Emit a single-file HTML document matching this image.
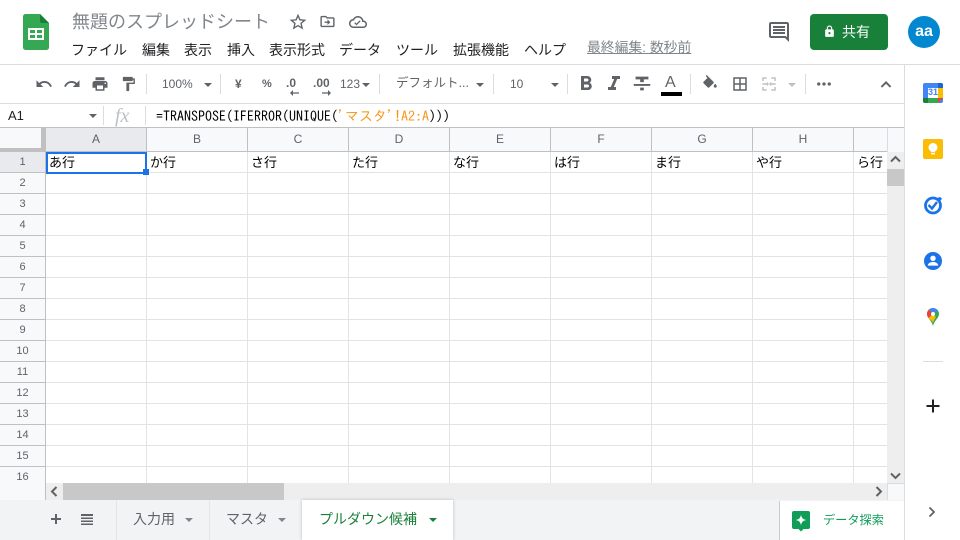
<!DOCTYPE html>
<html><head><meta charset="utf-8">
<style>
html,body{margin:0;padding:0;background:#fff}
#p{position:relative;width:960px;height:540px;overflow:hidden;background:#fff;font-family:"Liberation Sans","Noto Sans CJK JP",sans-serif;color:#3c4043}
.t{position:absolute;white-space:nowrap;line-height:1}
.a{position:absolute}
svg{position:absolute;overflow:visible}
.m{font-size:14px;top:43px;color:#202124}
.sep{position:absolute;top:74px;width:1px;height:20px;background:#dadce0}
.tb{font-size:12px;color:#5f6368;top:78px}
.ch{position:absolute;top:128px;height:23px;width:100px;text-align:center;font-size:12px;line-height:22px;color:#5f6368;border-right:1px solid #c0c0c0;background:#f8f9fa}
.rh{position:absolute;left:0;width:45px;height:20px;text-align:center;font-size:11px;line-height:21px;color:#5f6368;background:#f8f9fa;border-bottom:1px solid #c0c0c0;border-right:1px solid #c0c0c0}
.c{position:absolute;top:155px;font-size:13px;line-height:16px;color:#000;white-space:nowrap}
.tri{position:absolute;width:0;height:0;border-left:4px solid transparent;border-right:4px solid transparent;border-top:4px solid #5f6368}
</style></head><body><div id="p">

<!-- sheets logo -->
<svg style="left:23px;top:14px" width="26" height="36" viewBox="0 0 26 36"><path d="M2.500 0H17L26 9V33.500A2.500 2.500 0 0 1 23.500 36H2.500A2.500 2.500 0 0 1 0 33.500V2.500A2.500 2.500 0 0 1 2.500 0Z" fill="#34a853"/><path d="M17 0L26 9H19A2 2 0 0 1 17 7Z" fill="#188038"/><path d="M5 14H21V26H5ZM7 16V19H12V16ZM14 16V19H19V16ZM7 21V24H12V21ZM14 21V24H19V21Z" fill="#fff" fill-rule="evenodd"/></svg>

<div class="t" style="left:72px;top:13px;font-size:18px;color:#80868b">無題のスプレッドシート</div>
<svg style="left:288px;top:12px" width="20" height="20" viewBox="0 0 24 24"><path d="M22 9.240l-7.190-.62L12 2 9.190 8.630 2 9.240l5.460 4.730L5.820 21 12 17.270 18.180 21l-1.630-7.030L22 9.240zM12 15.400l-3.760 2.270 1-4.280-3.320-2.880 4.380-.38L12 6.100l1.710 4.040 4.380.38-3.320 2.880 1 4.280L12 15.400z" fill="#5f6368"/></svg>
<svg style="left:319px;top:13px" width="17" height="17" viewBox="0 0 24 24"><path d="M20 6h-8l-2-2H4c-1.100 0-2 .9-2 2v12c0 1.100.9 2 2 2h16c1.100 0 2-.9 2-2V8c0-1.100-.9-2-2-2zm0 12H4V6h5.170l2 2H20v10zm-8-4H8v-2h4V9l4 4-4 4v-3z" fill="#5f6368"/></svg>
<svg style="left:349px;top:13px" width="18" height="18" viewBox="0 0 24 24"><path d="M19.350 10.040C18.670 6.590 15.640 4 12 4 9.110 4 6.600 5.640 5.350 8.040 2.340 8.360 0 10.910 0 14c0 3.310 2.690 6 6 6h13c2.760 0 5-2.240 5-5 0-2.640-2.050-4.780-4.650-4.960zM19 18H6c-2.210 0-4-1.790-4-4s1.790-4 4-4h.71C7.370 7.690 9.480 6 12 6c3.040 0 5.500 2.460 5.500 5.500v.5H19c1.660 0 3 1.340 3 3s-1.340 3-3 3zm-9-1.500l-3-3 1.200-1.200 1.800 1.800 4.300-4.300 1.200 1.200z" fill="#5f6368"/></svg>

<div class="t m" style="left:71px">ファイル</div>
<div class="t m" style="left:142px">編集</div>
<div class="t m" style="left:184px">表示</div>
<div class="t m" style="left:227px">挿入</div>
<div class="t m" style="left:269px">表示形式</div>
<div class="t m" style="left:339px">データ</div>
<div class="t m" style="left:396px">ツール</div>
<div class="t m" style="left:453px">拡張機能</div>
<div class="t m" style="left:524px">ヘルプ</div>
<div class="t" style="left:587px;top:41px;font-size:13.800px;color:#80868b;text-decoration:underline">最終編集: 数秒前</div>

<!-- comment -->
<svg style="left:767px;top:20px" width="24" height="24" viewBox="0 0 24 24"><path d="M20 2H4c-1.100 0-2 .9-2 2v12c0 1.100.9 2 2 2h14l4 4V4c0-1.100-.9-2-2-2zm0 15.200L18.800 16H4V4h16v13.200zM6 12h12v2H6zm0-3h12v2H6zm0-3h12v2H6z" fill="#5f6368"/></svg>
<!-- share -->
<div class="a" style="left:810px;top:14px;width:78px;height:36px;background:#188038;border-radius:4px"></div>
<svg style="left:823px;top:25px" width="13" height="13" viewBox="0 0 24 24"><path d="M18 8h-1V6c0-2.760-2.240-5-5-5S7 3.240 7 6v2H6c-1.100 0-2 .9-2 2v10c0 1.100.9 2 2 2h12c1.100 0 2-.9 2-2V10c0-1.100-.9-2-2-2zM9 6c0-1.660 1.340-3 3-3s3 1.340 3 3v2H9V6zm3 11c-1.100 0-2-.9-2-2s.9-2 2-2 2 .9 2 2-.9 2-2 2z" fill="#fff"/></svg>
<div class="t" style="left:842px;top:25px;font-size:14px;color:#fff">共有</div>
<div class="a" style="left:908px;top:16px;width:32px;height:32px;border-radius:50%;background:#0288d1;color:#fff;font-size:16px;font-weight:bold;line-height:31px;text-align:center">aa</div>

<div class="a" style="left:0;top:64px;width:960px;height:1px;background:#dadce0"></div>

<!-- toolbar -->
<svg style="left:35px;top:75px" width="18" height="18" viewBox="0 0 24 24"><path d="M12.500 8c-2.650 0-5.050.99-6.900 2.600L2 7v9h9l-3.620-3.620c1.390-1.160 3.160-1.880 5.120-1.880 3.540 0 6.550 2.310 7.600 5.500l2.370-.78C21.080 11.030 17.150 8 12.500 8z" fill="#5f6368"/></svg>
<svg style="left:63px;top:75px" width="18" height="18" viewBox="0 0 24 24"><path d="M18.400 10.600C16.550 8.990 14.150 8 11.500 8c-4.650 0-8.580 3.030-9.960 7.220L3.900 16c1.050-3.190 4.050-5.500 7.600-5.500 1.950 0 3.730.72 5.120 1.880L13 16h9V7l-3.600 3.600z" fill="#5f6368"/></svg>
<svg style="left:91px;top:75px" width="18" height="18" viewBox="0 0 24 24"><path d="M19 8H5c-1.660 0-3 1.340-3 3v6h4v4h12v-4h4v-6c0-1.660-1.340-3-3-3zm-3 11H8v-5h8v5zm3-7c-.55 0-1-.45-1-1s.45-1 1-1 1 .45 1 1-.45 1-1 1zm-1-9H6v4h12V3z" fill="#5f6368"/></svg>
<svg style="left:120px;top:75px" width="17" height="18" viewBox="0 0 24 24"><path d="M18 4V3c0-.55-.45-1-1-1H5c-.55 0-1 .45-1 1v4c0 .55.45 1 1 1h12c.55 0 1-.45 1-1V6h1v4H9v11c0 .55.45 1 1 1h2c.55 0 1-.45 1-1v-9h8V4h-3z" fill="#5f6368"/></svg>
<div class="sep" style="left:146px"></div>
<div class="t tb" style="left:162px">100%</div><div class="tri" style="left:204px;top:83px"></div>
<div class="sep" style="left:220px"></div>
<div class="t tb" style="left:235px;font-weight:bold;font-size:12px;top:78px">¥</div>
<div class="t tb" style="left:262px;top:79px;font-size:11px;font-weight:bold">%</div>
<div class="t tb" style="left:286px;top:77px;font-weight:bold;font-size:12px">.0</div>
<svg style="left:290px;top:90px" width="9" height="6" viewBox="0 0 9 6"><path d="M9 2.400H3V0L0 3l3 3V3.600h6z" fill="#5f6368"/></svg>
<div class="t tb" style="left:313px;top:77px;font-weight:bold;font-size:12px">.00</div>
<svg style="left:322px;top:90px" width="9" height="6" viewBox="0 0 9 6"><path d="M0 2.400h6V0l3 3-3 3V3.600H0z" fill="#5f6368"/></svg>
<div class="t tb" style="left:340px">123</div><div class="tri" style="left:362px;top:83px"></div>
<div class="sep" style="left:379px"></div>
<div class="t tb" style="left:396px;top:77px;font-size:12.500px">デフォルト...</div><div class="tri" style="left:476px;top:83px"></div>
<div class="sep" style="left:493px"></div>
<div class="t tb" style="left:510px">10</div><div class="tri" style="left:551px;top:83px"></div>
<div class="sep" style="left:567px"></div>
<svg style="left:574px;top:72px" width="24" height="24" viewBox="0 0 24 24"><path d="M15.600 10.790c.97-.67 1.650-1.770 1.650-2.790 0-2.260-1.750-4-4-4H7v14h7.040c2.090 0 3.710-1.700 3.710-3.790 0-1.520-.86-2.820-2.150-3.420zM10 6.500h3c.83 0 1.500.67 1.500 1.500s-.67 1.500-1.500 1.500h-3v-3zm3.500 9H10v-3h3.500c.83 0 1.500.67 1.500 1.500s-.67 1.500-1.500 1.500z" fill="#5f6368"/></svg>
<svg style="left:602px;top:72px" width="24" height="24" viewBox="0 0 24 24"><path d="M10 4v3h2.210l-3.420 8H6v3h8v-3h-2.210l3.420-8H18V4z" fill="#5f6368"/></svg>
<svg style="left:631px;top:72px" width="22" height="24" viewBox="0 0 24 24"><path d="M10 19h4v-3h-4v3zM5 4v3h5v3h4V7h5V4H5zM3 14h18v-2H3v2z" fill="#5f6368"/></svg>
<div class="t" style="left:665px;top:75px;font-size:16px;color:#5f6368">A</div>
<div class="a" style="left:661px;top:92px;width:21px;height:4px;background:#000"></div>
<div class="sep" style="left:690px"></div>
<svg style="left:701px;top:75px" width="18" height="18" viewBox="0 0 24 24"><path d="M16.560 8.940L7.620 0 6.210 1.410l2.380 2.380-5.150 5.150c-.59.59-.59 1.540 0 2.120l5.500 5.500c.29.29.68.44 1.060.44s.77-.15 1.060-.44l5.500-5.500c.59-.58.59-1.530 0-2.120zM19 11.500s-2 2.170-2 3.500c0 1.100.9 2 2 2s2-.9 2-2c0-1.330-2-3.500-2-3.500z" fill="#5f6368"/></svg>
<svg style="left:731px;top:75px" width="18" height="18" viewBox="0 0 24 24"><path d="M3 3v18h18V3H3zm8 16H5v-6h6v6zm0-8H5V5h6v6zm8 8h-6v-6h6v6zm0-8h-6V5h6v6z" fill="#5f6368"/></svg>
<svg style="left:760px;top:75px" width="18" height="18" viewBox="0 0 24 24"><path d="M3 3h6v2H5v3H3zM15 3h6v5h-2V5h-4zM3 16h2v3h4v2H3zM19 16h2v5h-6v-2h4zM3 11h6V9l3 3-3 3v-2H3zM21 11h-6V9l-3 3 3 3v-2h6z" fill="#bdc1c6"/></svg>
<div class="tri" style="left:788px;top:83px;border-top-color:#bdc1c6"></div>
<div class="sep" style="left:805px"></div>
<svg style="left:815px;top:75px" width="18" height="18" viewBox="0 0 24 24"><circle cx="5" cy="12" r="2.200" fill="#5f6368"/><circle cx="12" cy="12" r="2.200" fill="#5f6368"/><circle cx="19" cy="12" r="2.200" fill="#5f6368"/></svg>
<svg style="left:877px;top:75px" width="18" height="18" viewBox="0 0 24 24"><path d="M12 8l-7 7 1.800 1.800L12 11.600l5.200 5.200L19 15z" fill="#5f6368"/></svg>

<div class="a" style="left:0;top:103px;width:904px;height:1px;background:#dadce0"></div>

<!-- formula bar -->
<div class="t" style="left:8px;top:109px;font-size:13px;color:#202124">A1</div>
<div class="tri" style="left:89px;top:114px"></div>
<div class="a" style="left:103px;top:106px;width:1px;height:19px;background:#dadce0"></div>
<div class="t" style="left:115px;top:106px;font-family:'Liberation Serif',serif;font-style:italic;font-size:20px;color:#bdc1c6">fx</div>
<div class="a" style="left:145px;top:106px;width:1px;height:19px;background:#dadce0"></div>
<div class="t" style="left:156px;top:109px;font-family:'IPAGothic','Liberation Mono',monospace;font-size:14px;color:#000">=TRANSPOSE(IFERROR(UNIQUE(<span style="color:#f7981d">'マスタ'!A2:A</span>)))</div>
<div class="a" style="left:0;top:127px;width:904px;height:1px;background:#c0c0c0"></div>

<!-- grid background -->
<svg style="left:0;top:0" width="960" height="540">
<g stroke="#e2e3e3" stroke-width="1">
<path d="M146.500 152V483M247.500 152V483M348.500 152V483M449.500 152V483M550.500 152V483M651.500 152V483M752.500 152V483M853.500 152V483"/>
<path d="M46 172.500H887M46 193.500H887M46 214.500H887M46 235.500H887M46 256.500H887M46 277.500H887M46 298.500H887M46 319.500H887M46 340.500H887M46 361.500H887M46 382.500H887M46 403.500H887M46 424.500H887M46 445.500H887M46 466.500H887"/>
</g></svg>

<!-- corner + column headers -->
<div class="a" style="left:0;top:128px;width:45px;height:24px;background:#f8f9fa"></div>
<div class="a" style="left:41px;top:128px;width:4px;height:24px;background:#c0c0c0"></div>
<div class="a" style="left:0;top:148px;width:45px;height:4px;background:#c0c0c0"></div>
<div class="a" style="left:45px;top:128px;width:859px;height:24px;background:#f8f9fa"></div>
<div class="ch" style="left:46px;background:#e8eaed">A</div>
<div class="ch" style="left:147px">B</div>
<div class="ch" style="left:248px">C</div>
<div class="ch" style="left:349px">D</div>
<div class="ch" style="left:450px">E</div>
<div class="ch" style="left:551px">F</div>
<div class="ch" style="left:652px">G</div>
<div class="ch" style="left:753px">H</div>
<div class="a" style="left:45px;top:128px;width:1px;height:24px;background:#c0c0c0"></div>
<div class="a" style="left:45px;top:151px;width:842px;height:1px;background:#c0c0c0"></div>
<div class="a" style="left:853px;top:128px;width:1px;height:24px;background:#c0c0c0"></div>
<div class="a" style="left:887px;top:128px;width:1px;height:24px;background:#dadce0"></div>

<!-- row headers -->
<div class="rh" style="top:152px;background:#e8eaed">1</div>
<div class="rh" style="top:173px">2</div>
<div class="rh" style="top:194px">3</div>
<div class="rh" style="top:215px">4</div>
<div class="rh" style="top:236px">5</div>
<div class="rh" style="top:257px">6</div>
<div class="rh" style="top:278px">7</div>
<div class="rh" style="top:299px">8</div>
<div class="rh" style="top:320px">9</div>
<div class="rh" style="top:341px">10</div>
<div class="rh" style="top:362px">11</div>
<div class="rh" style="top:383px">12</div>
<div class="rh" style="top:404px">13</div>
<div class="rh" style="top:425px">14</div>
<div class="rh" style="top:446px">15</div>
<div class="rh" style="top:467px;height:16px;border-bottom:0">16</div>

<!-- cells -->
<div class="c" style="left:49px">あ行</div>
<div class="c" style="left:150px">か行</div>
<div class="c" style="left:251px">さ行</div>
<div class="c" style="left:352px">た行</div>
<div class="c" style="left:453px">な行</div>
<div class="c" style="left:554px">は行</div>
<div class="c" style="left:655px">ま行</div>
<div class="c" style="left:756px">や行</div>
<div class="c" style="left:857px">ら行</div>

<!-- selection -->
<div class="a" style="left:46px;top:152px;width:97px;height:18px;border:2px solid #1a73e8"></div>
<div class="a" style="left:143px;top:169px;width:6px;height:6px;background:#1a73e8;border:0"></div>

<!-- vertical scrollbar -->
<div class="a" style="left:887px;top:152px;width:17px;height:331px;background:#eee"></div>
<div class="a" style="left:887px;top:169px;width:17px;height:17px;background:#c8c8c8"></div>
<svg style="left:890px;top:154px" width="11" height="11" viewBox="0 0 11 11"><path d="M1 7.500L5.500 3 10 7.500" fill="none" stroke="#5f6368" stroke-width="2"/></svg>
<svg style="left:890px;top:470px" width="11" height="11" viewBox="0 0 11 11"><path d="M1 3.500L5.500 8 10 3.500" fill="none" stroke="#5f6368" stroke-width="2"/></svg>
<div class="a" style="left:904px;top:65px;width:1px;height:475px;background:#dadce0"></div>

<!-- horizontal scrollbar -->
<div class="a" style="left:0;top:483px;width:45px;height:17px;background:#f8f9fa"></div>
<div class="a" style="left:45px;top:483px;width:1px;height:17px;background:#c0c0c0"></div>
<div class="a" style="left:46px;top:483px;width:841px;height:17px;background:#eee"></div>
<div class="a" style="left:63px;top:483px;width:221px;height:17px;background:#c8c8c8"></div>
<div class="a" style="left:887px;top:483px;width:17px;height:17px;background:#f8f9fa;border-top:1px solid #dadce0;border-left:1px solid #dadce0;box-sizing:border-box"></div>
<svg style="left:49px;top:486px" width="11" height="11" viewBox="0 0 11 11"><path d="M7.500 1L3 5.500 7.500 10" fill="none" stroke="#5f6368" stroke-width="2"/></svg>
<svg style="left:873px;top:486px" width="11" height="11" viewBox="0 0 11 11"><path d="M3.500 1L8 5.500 3.500 10" fill="none" stroke="#5f6368" stroke-width="2"/></svg>

<!-- bottom tabs -->
<div class="a" style="left:0;top:500px;width:904px;height:40px;background:#f1f3f4"></div>
<svg style="left:48px;top:511px" width="16" height="16" viewBox="0 0 16 16"><path d="M7 3h2v4h4v2H9v4H7V9H3V7h4z" fill="#5f6368"/></svg>
<svg style="left:80px;top:513px" width="14" height="13" viewBox="0 0 14 13"><path d="M1 1h12v2H1zM1 4.500h12v1.500H1zM1 7.500h12V9H1zM1 10.500h12V12H1z" fill="#5f6368"/></svg>
<div class="a" style="left:116px;top:500px;width:1px;height:40px;background:#e3e5e7"></div>
<div class="t" style="left:133px;top:512px;font-size:14px;color:#5f6368">入力用</div>
<div class="tri" style="left:185px;top:518px;border-top-color:#80868b"></div>
<div class="a" style="left:209px;top:500px;width:1px;height:40px;background:#e3e5e7"></div>
<div class="t" style="left:226px;top:512px;font-size:14px;color:#5f6368">マスタ</div>
<div class="tri" style="left:278px;top:518px;border-top-color:#80868b"></div>
<div class="a" style="left:302px;top:500px;width:151px;height:40px;background:#fff;box-shadow:0 0 3px rgba(60,64,67,.3)"></div>
<div class="t" style="left:319px;top:512px;font-size:14px;color:#188038">プルダウン候補</div>
<div class="tri" style="left:429px;top:518px;border-top-color:#188038"></div>

<!-- explore -->
<div class="a" style="left:779px;top:501px;width:125px;height:39px;background:#fff;border-left:1px solid #c8cacc;box-sizing:border-box"></div>
<svg style="left:792px;top:511px" width="18" height="21" viewBox="0 0 18 21"><path d="M2 0H16A2 2 0 0 1 18 2V16A2 2 0 0 1 16 18H11.500L9 20.500 6.500 18H2A2 2 0 0 1 0 16V2A2 2 0 0 1 2 0Z" fill="#0f9d58"/><path d="M9 3.500C9.500 7 11 8.500 14.500 9 11 9.500 9.500 11 9 14.500 8.500 11 7 9.500 3.500 9 7 8.500 8.500 7 9 3.500Z" fill="#fff"/></svg>
<div class="t" style="left:823px;top:514px;font-size:12.200px;color:#0f9d58">データ探索</div>

<!-- side panel -->
<svg style="left:923px;top:83px" width="20" height="20" viewBox="0 0 20 20"><rect width="20" height="20" rx="2" fill="#4285f4"/><path d="M0 15H5V20H2A2 2 0 0 1 0 18Z" fill="#188038"/><path d="M5 15H15V20H5Z" fill="#34a853"/><path d="M15 5H20V15H15Z" fill="#fbbc04"/><path d="M15 0H18A2 2 0 0 1 20 2V5H15Z" fill="#1967d2"/><path d="M15 15H20L15 20Z" fill="#ea4335"/><rect x="5" y="5" width="10" height="10" fill="#fff"/></svg>
<div class="t" style="left:928px;top:88px;font-size:9px;font-weight:bold;color:#4285f4">31</div>
<svg style="left:923px;top:139px" width="20" height="20" viewBox="0 0 20 20"><rect width="20" height="20" rx="2" fill="#fbbc04"/><circle cx="10" cy="8.500" r="4.500" fill="#fff"/><rect x="8" y="11" width="4" height="2" fill="#fff"/><rect x="8" y="13.800" width="4" height="1.600" fill="#fff"/></svg>
<svg style="left:923px;top:195px" width="20" height="20" viewBox="0 0 20 20"><circle cx="10" cy="10.500" r="7.500" fill="none" stroke="#1a73e8" stroke-width="2.800"/><path d="M5.500 10L9 13.500 14 7" fill="none" stroke="#1a73e8" stroke-width="2.400"/><path d="M14 3L17 2 19 3.500 17 6.500Z" fill="#1a73e8"/></svg>
<svg style="left:924px;top:252px" width="18" height="18" viewBox="0 0 18 18"><circle cx="9" cy="9" r="9" fill="#1a73e8"/><circle cx="9" cy="6.300" r="2.700" fill="#fff"/><path d="M3.800 13C4.500 10.800 7 10 9 10S13.500 10.800 14.200 13V13.600H3.800Z" fill="#fff"/></svg>
<svg style="left:926px;top:308px" width="14" height="18" viewBox="0 0 14 18"><path d="M7 0A6 6 0 0 1 13 6C13 10 8.500 12 7 18 5.500 12 1 10 1 6A6 6 0 0 1 7 0Z" fill="#34a853"/><path d="M1 6A6 6 0 0 1 3 1.500L7 6 2.500 10C1.500 8.800 1 7.500 1 6Z" fill="#ea4335"/><path d="M3 1.500A6 6 0 0 1 12 2.800L7 6Z" fill="#4285f4"/><path d="M2.500 10L7 6 10 9C9 10.500 7.800 12 7 15 6 12 4 11.500 2.500 10Z" fill="#fbbc04"/><circle cx="7" cy="6" r="2" fill="#fff"/></svg>
<div class="a" style="left:923px;top:361px;width:20px;height:1px;background:#dadce0"></div>
<svg style="left:925px;top:398px" width="16" height="16" viewBox="0 0 16 16"><path d="M7 1.500h2V7h5.500v2H9v5.500H7V9H1.500V7H7z" fill="#202124"/></svg>
<svg style="left:927px;top:506px" width="10" height="12" viewBox="0 0 10 12"><path d="M2.500 1.500L7 6 2.500 10.500" fill="none" stroke="#5f6368" stroke-width="1.800"/></svg>

</div></body></html>
